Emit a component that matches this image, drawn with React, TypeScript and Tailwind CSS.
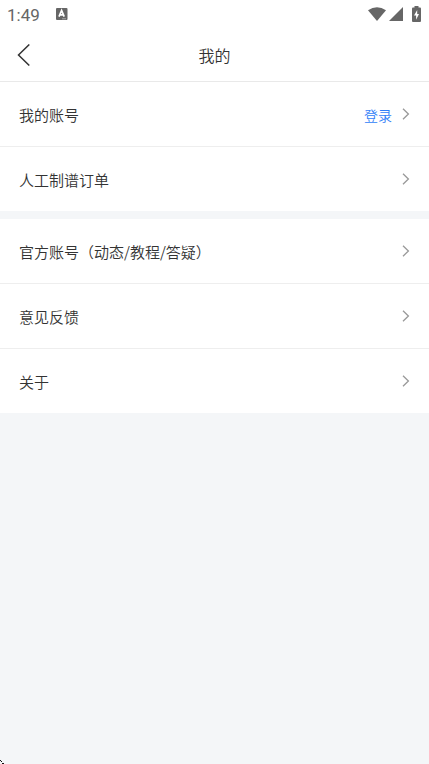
import React from "react";

const Arrow = () => {
  return (
    <svg width="8" height="12" viewBox="0 0 8 12" fill="none" className="shrink-0">
      <path d="M1 0.8L6.4 6L1 11.2" stroke="#999999" strokeWidth="1.3" />
    </svg>
  );
};

const Row = ({ label, action, last }: { label: string; action?: string; last?: boolean }) => {
  return (
    <div
      className={
        last
          ? "flex h-16 items-center justify-between bg-white pl-[19px] pr-[19px]"
          : "flex h-[65px] items-center justify-between border-b border-[#eeeeee] bg-white pl-[19px] pr-[19px]"
      }
    >
      <span className="pt-0.5 text-[15px] leading-[22px] text-[#333333]">{label}</span>
      <div className="flex items-center gap-2.5">
        {action && <span className="pt-0.5 text-sm leading-5 text-[#2f7ef7]">{action}</span>}
        <Arrow />
      </div>
    </div>
  );
};

const StatusBar = () => {
  return (
    <div className="flex h-7 items-center justify-between pl-[7px] pr-2">
      <div className="flex items-center">
        <span className="w-[49px] pt-0.5 font-['Roboto'] text-[17px] font-[450] leading-5 text-[#666666]">1:49</span>
        <svg width="12" height="12" viewBox="0 0 12 12">
          <rect width="11.5" height="12" rx="1" fill="#666666" />
          <path d="M3 8.6L5.6 2.4L8.2 8.6M4 6.8H7.2" stroke="#fff" strokeWidth="1.7" fill="none" />
          <path d="M6 10.8H10" stroke="#aaa" strokeWidth="1" />
        </svg>
      </div>
      <div className="flex items-center">
        <svg width="18" height="14" viewBox="0 0 18 14">
          <path d="M0 3.3Q9 -3 18 3.3L9 14Z" fill="#666666" />
        </svg>
        <svg width="14" height="14" viewBox="0 0 14 14" className="ml-[3px]">
          <path d="M14 0V14H0Z" fill="#666666" />
        </svg>
        <svg width="9" height="16" viewBox="0 0 9 15" preserveAspectRatio="none" className="ml-[9px]">
          <path d="M2.5 0H6.5V1.5H8Q9 1.5 9 2.5V14Q9 15 8 15H1Q0 15 0 14V2.5Q0 1.5 1 1.5H2.5Z" fill="#666666" />
          <path d="M5.2 3.8L2 9H4.1V13L7 7.6H5.2Z" fill="#fff" />
        </svg>
      </div>
    </div>
  );
};

const App = () => {
  return (
    <div
      lang="zh-CN"
      className="relative flex h-[764px] w-[429px] flex-col overflow-hidden bg-[#f4f6f8] font-['Noto_Sans_CJK_SC',sans-serif] font-[350]"
    >
      {/* Header */}
      <div className="h-[82px] border-b border-[#e9e9e9] bg-white">
        <StatusBar />
        <div className="grid h-[54px] grid-cols-[1fr_auto_1fr] items-center">
          <svg width="14" height="22" viewBox="0 0 14 22" fill="none" className="ml-[17px]">
            <path d="M12.3 0.5L1.5 11L12.3 21.5" stroke="#333333" strokeWidth="1.5" />
          </svg>
          <h1 className="pb-px text-base font-[350] leading-6 text-[#333333]">我的</h1>
        </div>
      </div>

      {/* Account */}
      <div>
        <Row label="我的账号" action="登录" />
        <Row label="人工制谱订单" last />
      </div>

      {/* Support */}
      <div className="mt-2">
        <Row label="官方账号（动态/教程/答疑）" />
        <Row label="意见反馈" />
        <Row label="关于" last />
      </div>

      {/* Corner mark */}
      <svg width="4" height="4" viewBox="0 0 4 4" className="absolute bottom-0 left-0">
        <path d="M0 0H1V1H2V2H1V1H0ZM2 3H4V4H2Z" fill="#111" />
      </svg>
    </div>
  );
};

export default App;
